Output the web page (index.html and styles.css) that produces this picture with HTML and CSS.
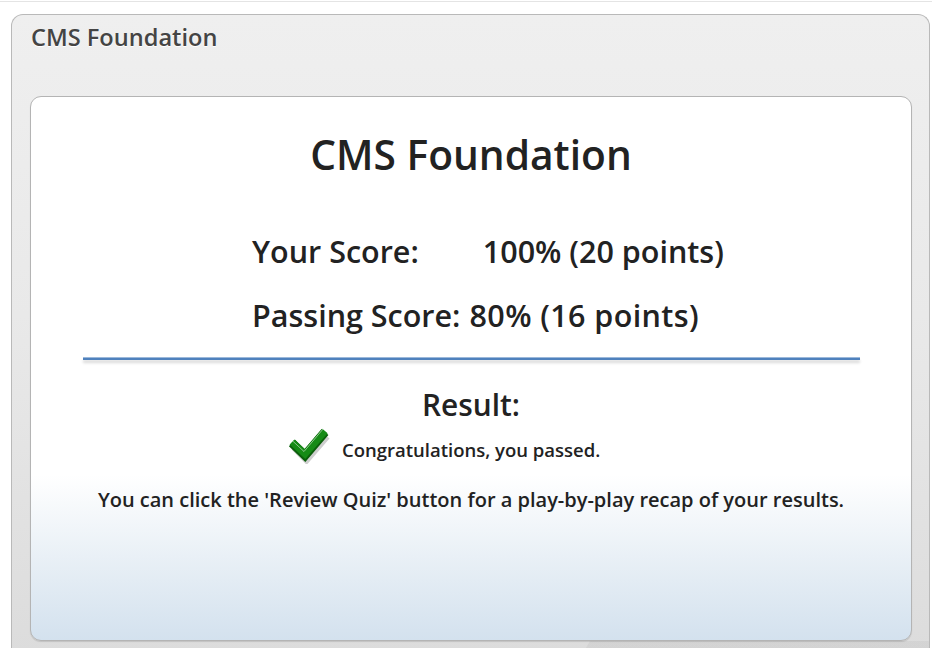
FILE: index.html
```html
<!DOCTYPE html>
<html>
<head>
<meta charset="utf-8">
<link rel="stylesheet" href="styles.css">
</head>
<body>
<div class="topline"></div>
<div class="outer">
  <div class="outer-title">CMS Foundation</div>
  <div class="card">
    <h1 class="card-title">CMS Foundation</h1>
    <div class="scores">
      <div class="score-row">
        <span class="label">Your Score:</span><span class="value value-your">100% (20 points)</span>
      </div>
      <div class="score-row">
        <span class="label">Passing Score:</span><span class="value value-pass">80% (16 points)</span>
      </div>
    </div>
    <div class="divider"></div>
    <div class="result-title">Result:</div>
    <div class="result-line">
      <svg class="check" width="42" height="38" viewBox="0 0 42 38">
        <path d="M5 18 L17 30 L37 7" fill="none" stroke="#bdbdbd" stroke-width="8" transform="translate(1.5,3)" opacity="0.75"/>
        <path d="M4 17 L17 29.5 L37 6" fill="none" stroke="#0b5f0b" stroke-width="9"/>
        <path d="M4 16 L17 28 L37 5" fill="none" stroke="#168b16" stroke-width="7"/>
        <path d="M3.5 15 L17 27.5 L36.5 4.5" fill="none" stroke="#ffffff" stroke-width="1" opacity="0.5" transform="translate(-1,-2)"/>
      </svg>
      <span class="congrats">Congratulations, you passed.</span>
    </div>
    <p class="note">You can click the 'Review Quiz' button for a play-by-play recap of your results.</p>
  </div>
  <div class="floor"></div>
</div>
</body>
</html>
```
FILE: styles.css
```css
html, body {
  margin: 0;
  padding: 0;
  background: #ffffff;
  overflow: hidden;
}
body {
  font-family: "Open Sans", "Noto Sans", sans-serif;
  color: #222;
}
.topline {
  height: 1px;
  margin-top: 1px;
  background: #e4e4e4;
}
.outer {
  margin: 12px 0 0 11px;
  width: 919px;
  height: 660px;
  border: 1px solid #b9b9b9;
  border-bottom: none;
  border-radius: 12px 12px 0 0;
  background: linear-gradient(to bottom, #efefef 0px, #e9e9e9 300px, #dcdcdc 640px);
  box-sizing: border-box;
}
.outer-title {
  font-size: 23.6px;
  font-weight: 600;
  line-height: 30px;
  color: #444;
  text-shadow: 0 1px 0 #fff;
  padding: 7px 0 0 19px;
  height: 81px;
  box-sizing: border-box;
}
.card {
  margin-left: 18px;
  width: 882px;
  height: 545px;
  border: 1px solid #b4b4b4;
  border-radius: 11px;
  box-shadow: 0 1px 1px rgba(0,0,0,0.12);
  background: linear-gradient(to bottom, #ffffff 0px, #ffffff 378px, #e9f0f6 460px, #d3e1ee 545px);
  box-sizing: border-box;
  text-align: center;
}
.card-title {
  margin: 0;
  padding-top: 32px;
  font-size: 40.7px;
  font-weight: 600;
  line-height: 50px;
  color: #222;
}
.scores {
  margin-top: 52px;
  padding-left: 221px;
  display: flex;
  flex-direction: column;
  gap: 24px;
  text-align: left;
}
.score-row {
  display: flex;
  font-size: 30.5px;
  font-weight: 600;
  line-height: 40px;
  height: 40px;
  white-space: nowrap;
}
.value-your { margin-left: 64px; }
.value-pass { margin-left: 9px; letter-spacing: 0.4px; }
.divider {
  margin: 22px 0 0 52px;
  width: 777px;
  height: 2px;
  background: #4f81bd;
  border-top: 1px solid #9bb8da;
  box-shadow: 0 3px 3px rgba(0,0,0,0.15);
}
.result-title {
  margin-top: 25px;
  font-size: 29.8px;
  font-weight: 600;
  line-height: 40px;
}
.result-line {
  display: flex;
  align-items: flex-start;
  gap: 12px;
  margin-top: 1px;
  padding-left: 257px;
  height: 38px;
}
.check { display: block; flex: none; }
.congrats {
  font-size: 18.5px;
  font-weight: 600;
  line-height: 26px;
  margin-top: 11px;
}
.note {
  margin: 22px 0 0;
  font-size: 20px;
  font-weight: 600;
  line-height: 28px;
}
.floor {
  height: 20px;
  background: linear-gradient(120deg, transparent 0, transparent 500px, rgba(0,0,0,0.04) 501px);
}
```
